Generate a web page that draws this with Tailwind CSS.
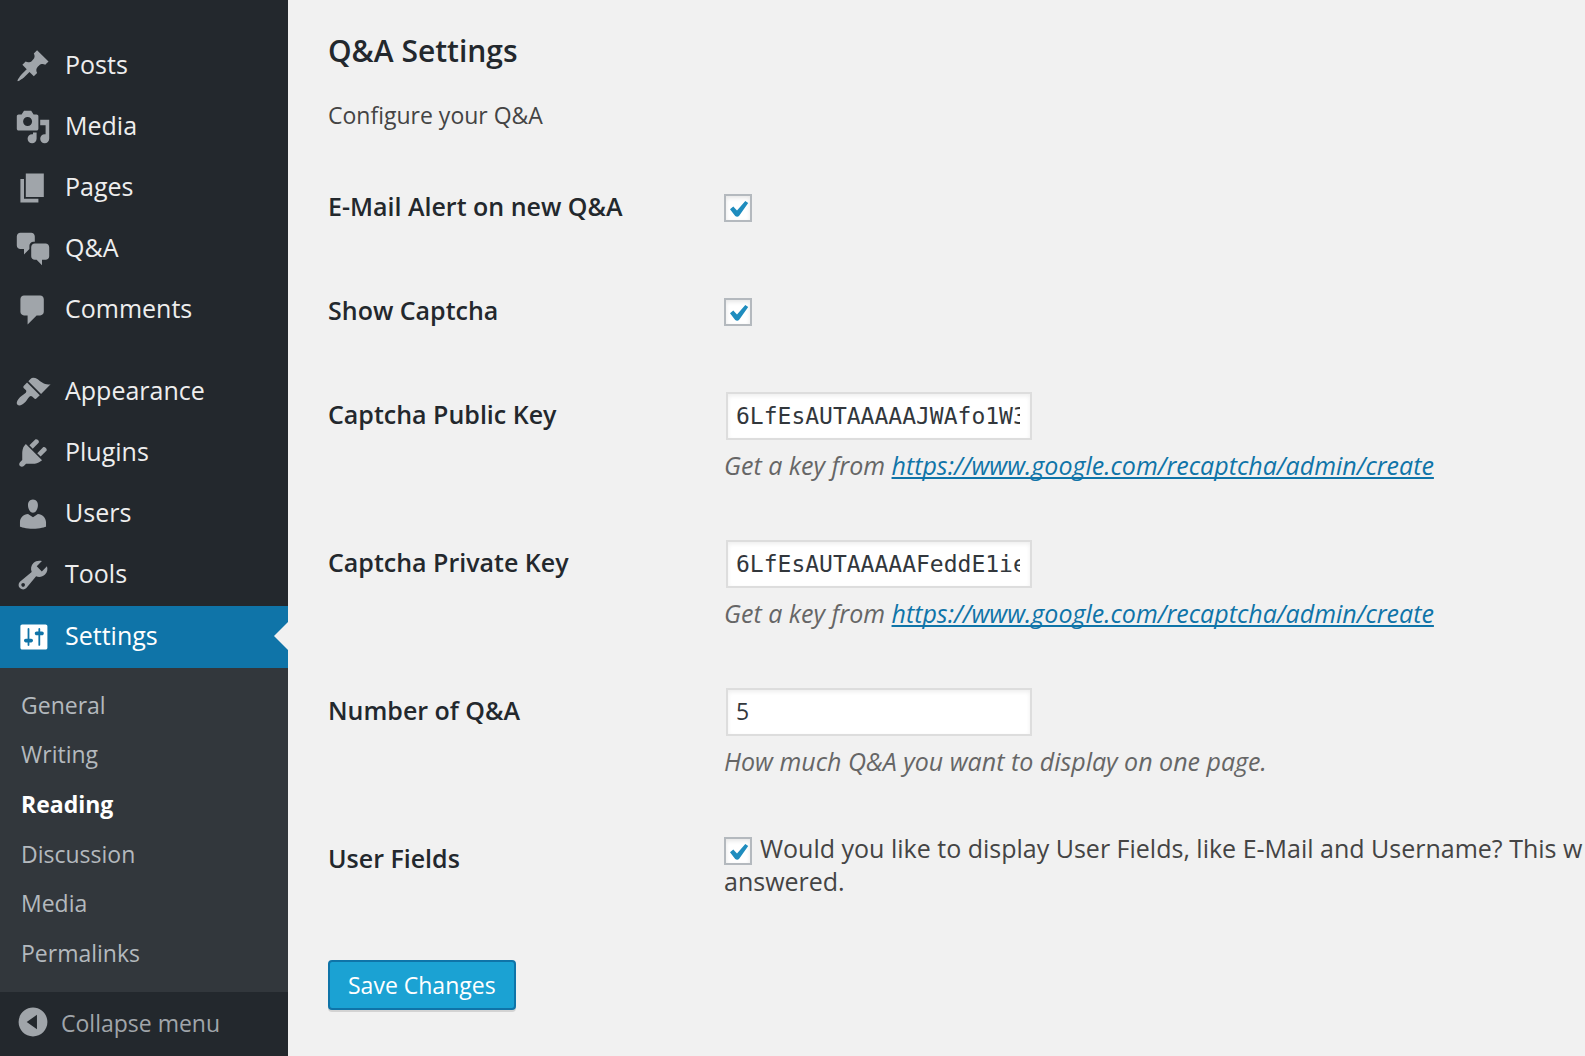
<!DOCTYPE html>
<html lang="en">
<head>
<meta charset="utf-8">
<meta name="viewport" content="width=device-width, initial-scale=1">
<title>Q&amp;A Settings</title>
<script src="https://cdn.jsdelivr.net/npm/@tailwindcss/browser@4"></script>
</head>
<body class="flex min-h-screen overflow-x-hidden bg-[#f1f1f1] font-['Open_Sans',sans-serif] text-[#444]">

<aside class="w-72 shrink-0 bg-[#23282d] text-[25px] leading-8 font-medium text-[#eee]">
  <nav aria-label="Admin menu" class="pt-9">
    <ul>
      <li><a href="#" class="flex h-[61px] items-center gap-3.5 pl-[15px] pb-[5px]"><svg viewBox="0 0 20 20" class="mt-1 size-9 shrink-0 fill-[#a0a5aa]"><path d="M10.44 3.02l1.82-1.82 6.36 6.35-1.83 1.82c-1.05-.68-2.48-.57-3.41.36l-.75.75c-.92.93-1.04 2.35-.35 3.41l-1.83 1.82-2.41-2.41-2.8 2.79c-.42.42-3.38 2.71-3.8 2.29s1.86-3.39 2.28-3.81l2.79-2.79L4.1 9.36l1.83-1.82c1.05.69 2.48.57 3.4-.36l.75-.75c.93-.92 1.05-2.35.36-3.41z"/></svg>Posts</a></li>
      <li><a href="#" class="flex h-[61px] items-center gap-3.5 pl-[15px] pb-[5px]"><svg viewBox="0 0 20 20" class="mt-1 size-9 shrink-0 fill-[#a0a5aa]"><path d="M13 11V4c0-.55-.45-1-1-1h-1.67L9 1H5L3.67 3H2c-.55 0-1 .45-1 1v7c0 .55.45 1 1 1h10c.55 0 1-.45 1-1zM7 4.5c1.38 0 2.5 1.12 2.5 2.5S8.38 9.5 7 9.5 4.5 8.38 4.5 7 5.62 4.5 7 4.5zM14 6h5v10.5c0 1.38-1.12 2.5-2.5 2.5S14 17.88 14 16.5s1.12-2.5 2.5-2.5c.17 0 .34.02.5.05V9h-3V6zm-4 8.05V13h2v3.5c0 1.38-1.12 2.5-2.5 2.5S7 17.88 7 16.5 8.12 14 9.5 14c.17 0 .34.02.5.05z"/></svg>Media</a></li>
      <li><a href="#" class="flex h-[61px] items-center gap-3.5 pl-[15px] pb-[5px]"><svg viewBox="0 0 20 20" class="mt-1 size-9 shrink-0 fill-[#a0a5aa]"><path d="M6 15V2h10v13H6zm-1 1h8v2H3V5h2v11z"/></svg>Pages</a></li>
      <li><a href="#" class="flex h-[61px] items-center gap-3.5 pl-[15px] pb-[5px]"><svg viewBox="0 0 20 20" class="mt-1 size-9 shrink-0 fill-[#a0a5aa]"><path d="M11 6h-.82C9.07 6 8 7.2 8 8.16V10l-3 3v-3H3c-1.1 0-2-.9-2-2V3c0-1.1.9-2 2-2h6c1.1 0 2 .9 2 2v3zm0 1h6c1.1 0 2 .9 2 2v5c0 1.1-.9 2-2 2h-2v3l-3-3h-1c-1.1 0-2-.9-2-2V9c0-1.1.9-2 2-2z"/></svg>Q&amp;A</a></li>
      <li><a href="#" class="flex h-[61px] items-center gap-3.5 pl-[15px] pb-[5px]"><svg viewBox="0 0 20 20" class="mt-1 size-9 shrink-0 fill-[#a0a5aa]"><path d="M5 2h9c1.1 0 2 .9 2 2v7c0 1.1-.9 2-2 2h-2l-5 5v-5H5c-1.1 0-2-.9-2-2V4c0-1.1.9-2 2-2z"/></svg>Comments</a></li>
      <li class="mt-[21px]"><a href="#" class="flex h-[61px] items-center gap-3.5 pl-[15px] pb-[5px]"><svg viewBox="0 0 20 20" class="mt-1 size-9 shrink-0 fill-[#a0a5aa]"><path d="M14.48 11.06L7.41 3.99l1.5-1.5c.5-.56 2.3-.47 3.51.32 1.21.8 1.43 1.28 2.91 2.1 1.18.64 2.45 1.26 4.45.85zm-.71.71L6.7 4.7 4.93 6.47c-.39.39-.39 1.02 0 1.41l1.06 1.06c.39.39.39 1.03 0 1.42-.6.6-1.43 1.11-2.21 1.69-.35.26-.7.53-1.01.84C1.43 14.23.4 16.08 1.4 17.07c.99 1 2.84-.03 4.18-1.36.31-.31.58-.66.85-1.02.57-.78 1.08-1.61 1.69-2.21.39-.39 1.02-.39 1.41 0l1.06 1.06c.39.39 1.02.39 1.41 0z"/></svg>Appearance</a></li>
      <li><a href="#" class="flex h-[61px] items-center gap-3.5 pl-[15px] pb-[5px]"><svg viewBox="0 0 20 20" class="mt-1 size-9 shrink-0 fill-[#a0a5aa]"><path d="M13.11 4.36L9.87 7.6 8 5.73l3.24-3.24c.35-.34 1.05-.2 1.56.32.52.51.66 1.21.31 1.55zm-8 1.77l.91-1.12 9.01 9.01-1.19.84c-.71.71-2.63 1.16-3.82 1.16H6.14L4.9 17.26c-.59.59-1.54.59-2.12 0-.59-.58-.59-1.53 0-2.12l1.24-1.24v-3.88c0-1.13.4-3.19 1.09-3.89zm7.26 3.97l3.24-3.24c.34-.35 1.04-.21 1.55.31.52.51.66 1.21.31 1.55l-3.24 3.25z"/></svg>Plugins</a></li>
      <li><a href="#" class="flex h-[61px] items-center gap-3.5 pl-[15px] pb-[5px]"><svg viewBox="0 0 20 20" class="mt-1 size-9 shrink-0 fill-[#a0a5aa]"><path d="M10 9.25c-2.27 0-2.73-3.44-2.73-3.44C7 4.02 7.82 2 9.97 2c2.16 0 2.98 2.02 2.71 3.81 0 0-.41 3.44-2.68 3.44zm0 2.57L12.72 10c2.39 0 4.52 2.33 4.52 4.53v2.49s-3.65 1.13-7.24 1.13c-3.65 0-7.24-1.13-7.24-1.13v-2.49c0-2.25 1.94-4.48 4.47-4.48z"/></svg>Users</a></li>
      <li><a href="#" class="flex h-[61px] items-center gap-3.5 pl-[15px] pb-[5px]"><svg viewBox="0 0 20 20" class="mt-1 size-9 shrink-0 fill-[#a0a5aa]"><path d="M16.68 9.77c-1.34 1.34-3.3 1.67-4.95.99l-5.41 6.52c-.99.99-2.59.99-3.58 0s-.99-2.59 0-3.57l6.52-5.42c-.68-1.65-.35-3.61.99-4.95 1.28-1.28 3.12-1.62 4.72-1.06l-2.89 2.89 2.82 2.82 2.86-2.87c.53 1.58.18 3.39-1.08 4.65zM3.81 16.21c.4.39 1.04.39 1.43 0 .4-.4.4-1.04 0-1.43-.39-.4-1.03-.4-1.43 0-.39.39-.39 1.03 0 1.43z"/></svg>Tools</a></li>
      <li>
        <a href="#" aria-current="true" class="relative flex h-[62px] items-center gap-3.5 bg-[#0f74a8] pl-[15px] pb-[5px] text-white"><svg viewBox="0 0 20 20" class="mt-1 size-9 shrink-0 fill-white"><path d="M18 16V4c0-.55-.45-1-1-1H4c-.55 0-1 .45-1 1v12c0 .55.45 1 1 1h13c.55 0 1-.45 1-1zM8 11h1c.55 0 1 .45 1 1s-.45 1-1 1H8v1.500c0 .28-.22.5-.5.5s-.5-.22-.5-.5V13H6c-.55 0-1-.45-1-1s.45-1 1-1h1V5.500c0-.28.22-.5.5-.5s.5.22.5.5V11zm5-2h-1c-.55 0-1-.45-1-1s.45-1 1-1h1V5.500c0-.28.22-.5.5-.5s.5.22.5.5V7h1c.55 0 1 .45 1 1s-.45 1-1 1h-1v5.500c0 .28-.22.5-.5.5s-.5-.22-.5-.5V9z"/></svg>Settings
          <svg viewBox="0 0 14 28" class="absolute top-4 right-0 h-7 w-3.5 fill-[#f1f1f1]"><path d="M14 0v28L0 14z"/></svg></a>
        <ul class="grid h-[324px] auto-rows-fr items-center bg-[#32373c] pt-3 pb-3.5 pl-[21px] text-[23px] leading-8 text-[#b4b9be]">
          <li><a href="#">General</a></li>
          <li><a href="#">Writing</a></li>
          <li><a href="#" aria-current="page" class="font-bold text-white">Reading</a></li>
          <li><a href="#">Discussion</a></li>
          <li><a href="#">Media</a></li>
          <li><a href="#">Permalinks</a></li>
        </ul>
      </li>
    </ul>
  </nav>
  <button type="button" class="flex h-16 w-full items-center gap-2.5 pl-[15px] pb-1 text-[23px] leading-8 text-[#a0a5aa]"><svg viewBox="0 0 20 20" class="size-9 shrink-0 fill-[#a0a5aa]"><path d="M10 2c4.420 0 8 3.580 8 8s-3.580 8-8 8-8-3.580-8-8 3.580-8 8-8zm2.200 12V6L6.500 10z"/></svg><span class="pt-0.5">Collapse menu</span></button>
</aside>

<main class="min-w-0 flex-1 pt-[31px] pl-10">
  <h1 class="text-3xl leading-10 font-semibold text-[#23282d]">Q&amp;A Settings</h1>
  <p class="mt-7 text-[23px] leading-8 font-medium">Configure your Q&amp;A</p>
  <form class="mt-6">
    <table class="w-full table-fixed text-[25px] leading-8">
      <tbody class="[&_th]:w-[396px] [&_th]:pt-[35px] [&_th]:text-left [&_th]:align-top [&_th]:font-semibold [&_th]:text-[#23282d] [&_td]:align-top">
        <tr class="h-[104px]">
          <th scope="row"><label for="alert">E-Mail Alert on new Q&amp;A</label></th>
          <td class="pt-[39px]"><span class="grid size-7"><input id="alert" type="checkbox" checked class="peer col-start-1 row-start-1 size-7 appearance-none border-2 border-[#b4b9be] bg-white shadow-[inset_0_2px_4px_rgba(0,0,0,0.1)]"><svg viewBox="0 0 28 28" class="pointer-events-none invisible col-start-1 row-start-1 size-7 fill-[#1e8cbe] peer-checked:visible"><path d="M6 15.300L9.300 12.600L13 16.600L21.300 7L24.200 9L15 22Q13.200 23.600 11.200 22z"/></svg></span></td>
        </tr>
        <tr class="h-[104px]">
          <th scope="row"><label for="captcha">Show Captcha</label></th>
          <td class="pt-[39px]"><span class="grid size-7"><input id="captcha" type="checkbox" checked class="peer col-start-1 row-start-1 size-7 appearance-none border-2 border-[#b4b9be] bg-white shadow-[inset_0_2px_4px_rgba(0,0,0,0.1)]"><svg viewBox="0 0 28 28" class="pointer-events-none invisible col-start-1 row-start-1 size-7 fill-[#1e8cbe] peer-checked:visible"><path d="M6 15.300L9.300 12.600L13 16.600L21.300 7L24.200 9L15 22Q13.200 23.600 11.200 22z"/></svg></span></td>
        </tr>
        <tr class="h-[148px]">
          <th scope="row"><label for="public">Captcha Public Key</label></th>
          <td class="pt-[29px]"><input id="public" type="text" value="6LfEsAUTAAAAAJWAfo1W3" class="ml-0.5 block h-12 w-[306px] border-2 border-[#ddd] bg-white pr-2.5 pl-2 font-['DejaVu_Sans_Mono',monospace] text-[23px] text-[#32373c] shadow-[inset_0_2px_4px_rgba(0,0,0,0.07)]">
            <p class="mt-[9px] text-[#666] italic">Get a key from <a href="#" class="text-[#0f74a8] underline decoration-2 underline-offset-2 [text-decoration-skip-ink:none]">https://www.google.com/recaptcha/admin/create</a></p></td>
        </tr>
        <tr class="h-[148px]">
          <th scope="row"><label for="private">Captcha Private Key</label></th>
          <td class="pt-[29px]"><input id="private" type="text" value="6LfEsAUTAAAAAFeddE1ie" class="ml-0.5 block h-12 w-[306px] border-2 border-[#ddd] bg-white pr-2.5 pl-2 font-['DejaVu_Sans_Mono',monospace] text-[23px] text-[#32373c] shadow-[inset_0_2px_4px_rgba(0,0,0,0.07)]">
            <p class="mt-[9px] text-[#666] italic">Get a key from <a href="#" class="text-[#0f74a8] underline decoration-2 underline-offset-2 [text-decoration-skip-ink:none]">https://www.google.com/recaptcha/admin/create</a></p></td>
        </tr>
        <tr class="h-[148px]">
          <th scope="row"><label for="number">Number of Q&amp;A</label></th>
          <td class="pt-[29px]"><input id="number" type="text" value="5" class="ml-0.5 block h-12 w-[306px] border-2 border-[#ddd] bg-white pr-2.5 pb-0.5 pl-2 text-[23px] font-medium text-[#32373c] shadow-[inset_0_2px_4px_rgba(0,0,0,0.07)]">
            <p class="mt-[9px] text-[#666] italic">How much Q&amp;A you want to display on one page.</p></td>
        </tr>
        <tr class="h-[117px]">
          <th scope="row">User Fields</th>
          <td class="pt-[25px]"><label for="fields" class="block whitespace-nowrap"><span class="mr-2 inline-grid size-7 align-middle"><input id="fields" type="checkbox" checked class="peer col-start-1 row-start-1 size-7 appearance-none border-2 border-[#b4b9be] bg-white shadow-[inset_0_2px_4px_rgba(0,0,0,0.1)]"><svg viewBox="0 0 28 28" class="pointer-events-none invisible col-start-1 row-start-1 size-7 fill-[#1e8cbe] peer-checked:visible"><path d="M6 15.300L9.300 12.600L13 16.600L21.300 7L24.200 9L15 22Q13.200 23.600 11.200 22z"/></svg></span>Would you like to display User Fields, like E-Mail and Username? This w<br>answered.</label></td>
        </tr>
      </tbody>
    </table>
    <button type="submit" class="mt-9 h-[50px] rounded border-2 border-[#0f74a8] bg-[#1ba2d3] px-[18px] text-[23px] leading-8 font-medium text-white shadow-[0_2px_0_rgba(0,0,0,0.12)]">Save Changes</button>
  </form>
</main>
</body>
</html>
